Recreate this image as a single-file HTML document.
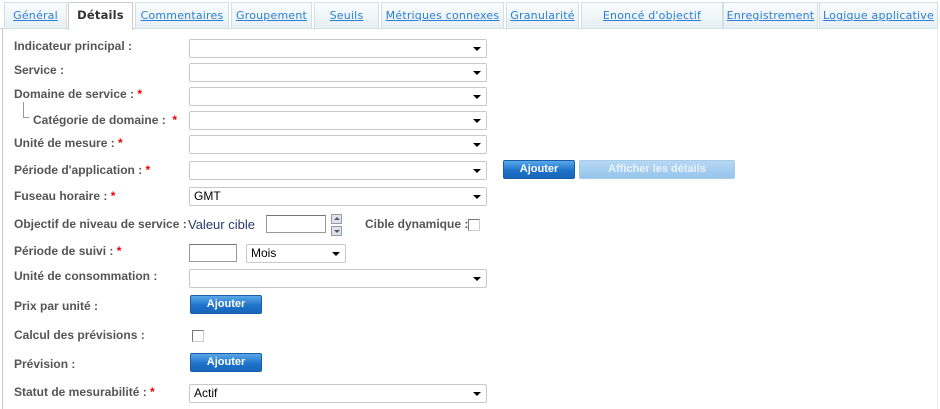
<!DOCTYPE html>
<html><head><meta charset="utf-8"><style>
*{margin:0;padding:0;box-sizing:border-box}
body{width:940px;height:409px;background:#fff;position:relative;overflow:hidden;font-family:"DejaVu Sans","Liberation Sans",sans-serif;font-size:11px}
.tab{position:absolute;top:2px;height:27px;border:1px solid #cfe0e6;background:linear-gradient(#fafcfd,#e6eff3);text-align:center;line-height:25px;color:#2b7fd4;text-decoration:underline;font-size:11px;letter-spacing:0.2px}
.tab.act{background:#fff;color:#333;font-weight:bold;text-decoration:none;height:28px;border-color:#ccc;border-bottom:none;z-index:2;font-size:11.5px}
.line{position:absolute;left:0;top:28px;width:937px;height:1px;background:#c8d3d8}
.lb{position:absolute;left:14px;color:#555;font-weight:bold;font-size:12px;white-space:nowrap;font-family:"Liberation Sans",sans-serif;}
.req{color:#e00;font-weight:bold}
.sel{position:absolute;left:189px;width:298px;height:19px;border:1px solid #c9c9c9;border-radius:2px;background:#fff;font-size:12px;font-family:"Liberation Sans",sans-serif;padding-left:4px;line-height:17px;color:#000}
.sel:after{content:"";position:absolute;right:5px;top:7px;border-left:4px solid transparent;border-right:4px solid transparent;border-top:4px solid #000}
.btn{position:absolute;height:19px;border-radius:2px;background:linear-gradient(#5aa8ea,#1f73c9 55%,#1665ba);border:1px solid #1a5ea6;color:#fff;font-weight:bold;font-size:11px;font-family:"Liberation Sans",sans-serif;text-align:center;line-height:16px}
.btn.dis{background:linear-gradient(#b7d8f3,#95c4ec);border-color:#a8cdea;color:#eaf3fb}
.inp{position:absolute;border:1px solid #999;border-top-color:#777;background:#fff}
.cb{position:absolute;width:12px;height:12px;border:1px solid #777;border-right-color:#ccc;border-bottom-color:#ccc;background:#fff}
.sp{position:absolute;left:331px;width:11px;height:10px;border:1px solid #99a;background:#dde3ea}
.sp:after{content:"";position:absolute;left:2px;top:2px;border-left:3px solid transparent;border-right:3px solid transparent}
.up:after{border-bottom:3px solid #556}
.dn:after{border-top:3px solid #556;top:3px}
</style></head><body>
<div class="line"></div>
<div style="position:absolute;left:2px;top:28px;width:1px;height:381px;background:#ccc"></div>
<div style="position:absolute;left:937px;top:28px;width:1px;height:381px;background:#eee"></div>
<div class="tab" style="left:4px;width:63px">Général</div>
<div class="tab act" style="left:68px;width:65px">Détails</div>
<div class="tab" style="left:135px;width:94px">Commentaires</div>
<div class="tab" style="left:231px;width:81px">Groupement</div>
<div class="tab" style="left:314px;width:65px">Seuils</div>
<div class="tab" style="left:381px;width:123px">Métriques connexes</div>
<div class="tab" style="left:506px;width:73px">Granularité</div>
<div class="tab" style="left:581px;width:142px">Enoncé d'objectif</div>
<div class="tab" style="left:723px;width:95px">Enregistrement</div>
<div class="tab" style="left:819px;width:119px">Logique applicative</div>

<div class="lb" style="top:39px">Indicateur principal :</div>
<div class="sel" style="top:39px"></div>
<div class="lb" style="top:63px">Service :</div>
<div class="sel" style="top:63px"></div>
<div class="lb" style="top:87px">Domaine de service : <span class="req">*</span></div>
<div class="sel" style="top:87px"></div>
<div style="position:absolute;left:23px;top:102px;width:1px;height:16px;background:#999"></div>
<div style="position:absolute;left:23px;top:117px;width:6px;height:1px;background:#999"></div>
<div class="lb" style="left:33px;top:113px">Catégorie de domaine : &nbsp;<span class="req">*</span></div>
<div class="sel" style="top:111px"></div>
<div class="lb" style="top:136px">Unité de mesure : <span class="req">*</span></div>
<div class="sel" style="top:135px"></div>
<div class="lb" style="top:163px">Période d'application : <span class="req">*</span></div>
<div class="sel" style="top:161px"></div>
<div class="btn" style="left:503px;top:160px;width:72px">Ajouter</div>
<div class="btn dis" style="left:579px;top:160px;width:156px">Afficher les détails</div>
<div class="lb" style="top:189px">Fuseau horaire : <span class="req">*</span></div>
<div class="sel" style="top:187px">GMT</div>
<div class="lb" style="top:217px">Objectif de niveau de service :</div>
<div style="position:absolute;left:188px;top:217px;font-size:13px;color:#2a3a6a;font-family:'Liberation Sans',sans-serif">Valeur cible</div>
<div class="inp" style="left:266px;top:215px;width:60px;height:18px"></div>
<div class="sp up" style="top:214px"></div>
<div class="sp dn" style="top:226px"></div>
<div class="lb" style="left:365px;top:217px">Cible dynamique :</div>
<div class="cb" style="left:468px;top:219px"></div>
<div class="lb" style="top:244px">Période de suivi : <span class="req">*</span></div>
<div class="inp" style="left:189px;top:244px;width:48px;height:18px"></div>
<div class="sel" style="left:246px;top:244px;width:100px;padding-left:4px">Mois</div>
<div class="lb" style="top:269px">Unité de consommation :</div>
<div class="sel" style="top:269px"></div>
<div class="lb" style="top:299px">Prix par unité :</div>
<div class="btn" style="left:190px;top:295px;width:72px">Ajouter</div>
<div class="lb" style="top:328px">Calcul des prévisions :</div>
<div class="cb" style="left:192px;top:330px"></div>
<div class="lb" style="top:357px">Prévision :</div>
<div class="btn" style="left:190px;top:353px;width:72px">Ajouter</div>
<div class="lb" style="top:385px">Statut de mesurabilité : <span class="req">*</span></div>
<div class="sel" style="top:384px">Actif</div>
</body></html>
